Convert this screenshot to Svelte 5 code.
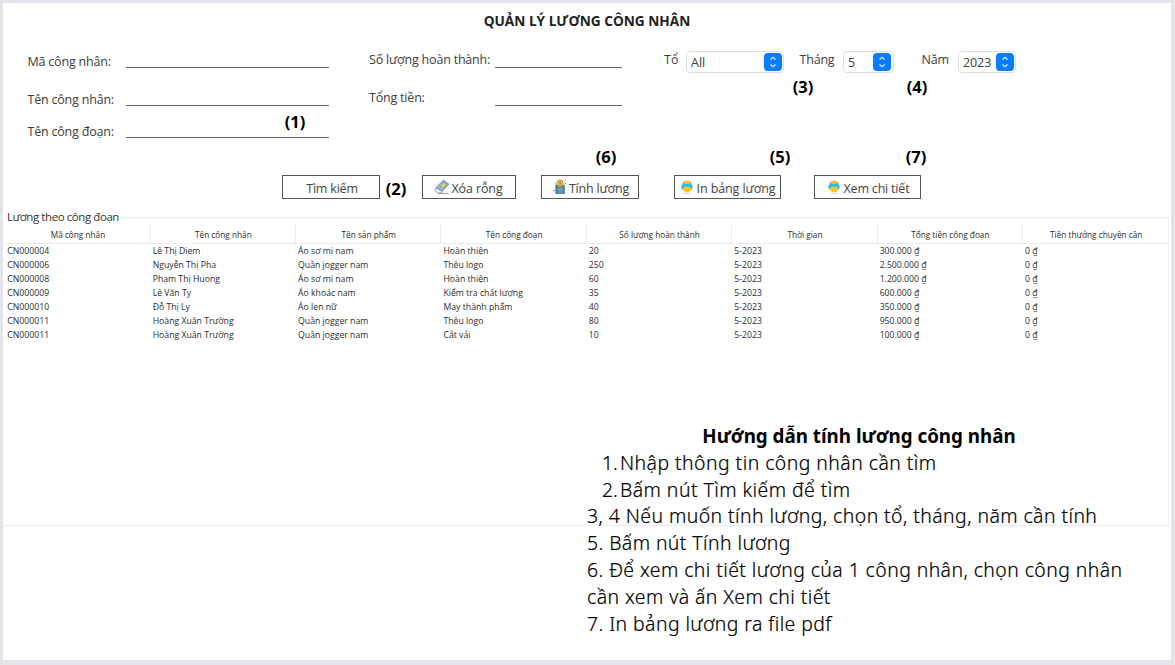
<script>
  const columns = [
    'Mã công nhân', 'Tên công nhân', 'Tên sản phẩm', 'Tên công đoạn',
    'Số lượng hoàn thành', 'Thời gian', 'Tổng tiền công đoạn', 'Tiền thưởng chuyên cần'
  ];
  const rows = [
    ['CN000004', 'Lê Thị Diem', 'Áo sơ mi nam', 'Hoàn thiện', '20', '5-2023', '300.000 ₫', '0 ₫'],
    ['CN000006', 'Nguyễn Thị Pha', 'Quần jogger nam', 'Thêu logo', '250', '5-2023', '2.500.000 ₫', '0 ₫'],
    ['CN000008', 'Phạm Thị Huong', 'Áo sơ mi nam', 'Hoàn thiện', '60', '5-2023', '1.200.000 ₫', '0 ₫'],
    ['CN000009', 'Lê Văn Ty', 'Áo khoác nam', 'Kiểm tra chất lượng', '35', '5-2023', '600.000 ₫', '0 ₫'],
    ['CN000010', 'Đỗ Thị Ly', 'Áo len nữ', 'May thành phẩm', '40', '5-2023', '350.000 ₫', '0 ₫'],
    ['CN000011', 'Hoàng Xuân Trường', 'Quần jogger nam', 'Thêu logo', '80', '5-2023', '950.000 ₫', '0 ₫'],
    ['CN000011', 'Hoàng Xuân Trường', 'Quần jogger nam', 'Cắt vải', '10', '5-2023', '100.000 ₫', '0 ₫']
  ];
</script>

{#snippet stepper()}
  <span class="stepper">
    <svg width="18" height="18" viewBox="0 0 18 18">
      <path d="M6.5 6.5 9 4.3 11.5 6.5M6.5 11.5 9 13.7 11.5 11.5" fill="none" stroke="#d6eaff" stroke-width="1.2" />
    </svg>
  </span>
{/snippet}

{#snippet eraser()}
  <svg width="16" height="16" viewBox="0 0 16 16">
    <path d="M2 8.6 9.4 1.2 14.8 5 8 12.6z" fill="#8db6ea" stroke="#5b82b8" stroke-width=".9" />
    <path d="M2 8.6 8 12.6 6.6 14.2H4.4L1 11.6z" fill="#f6f8fb" stroke="#7b8794" stroke-width=".8" />
    <path d="M6 7.2 9.6 3.4l3 2L9 9.4z" fill="#f4cd5c" stroke="#6482ad" stroke-width=".6" />
    <path d="M4 14.4h10.5" stroke="#7c858d" stroke-width=".9" />
  </svg>
{/snippet}

{#snippet purse()}
  <svg width="14" height="16" viewBox="0 0 14 16">
    <path d="M2.6 5.8h9V15h-9z" fill="#5e93af" />
    <path d="M2.6 5.8h1.6V15H2.6zM10.4 6h1.2v9h-1.2z" fill="#48788f" />
    <path d="M5.4 9.8h3.4v1.5H5.4z" fill="#86b0c5" />
    <circle cx="7.1" cy="4" r="3.3" fill="#e8bf3f" stroke="#a08936" stroke-width=".5" />
    <path d="M7.1 2.4v3.2M6.2 3.1h1.8M6.2 4.8h1.8" stroke="#937222" stroke-width=".6" />
    <path d="M11.3 2.6l1.2-1M12 4.6h1.3M2.6 4.6l-.9-.8M.2 11.6h1.4" stroke="#4a5660" stroke-width=".8" />
  </svg>
{/snippet}

{#snippet printer()}
  <svg width="12" height="14" viewBox="0 0 12 14">
    <ellipse cx="6" cy="13.4" rx="4.5" ry=".6" fill="#dcdce0" />
    <path d="M2.4 4.8V2.5L4.6.5h2.8l2.2 2v2.3z" fill="#f6c42c" />
    <path d="M1.7 4 3.4 1.8M8.6 1.8 10.3 4" stroke="#c06ac6" stroke-width="1.2" />
    <rect x=".4" y="4" width="11.2" height="5.6" rx="2.2" fill="#25bfe9" />
    <path d="M3.2 6.8h5.6l1.6 2.8Q8.8 12.4 6 12.4T1.6 9.6z" fill="#f9c51b" />
  </svg>
{/snippet}

<main class="sheet">
  <h1>QUẢN LÝ LƯƠNG CÔNG NHÂN</h1>

  <section class="form">
    <div class="fields worker">
      <label><span>Mã công nhân:</span><i></i></label>
      <label><span>Tên công nhân:</span><i></i></label>
      <label><span>Tên công đoạn:</span><i></i></label>
    </div>
    <div class="fields totals">
      <label><span>Số lượng hoàn thành:</span><i></i></label>
      <label><span>Tổng tiền:</span><i></i></label>
    </div>
    <div class="filters">
      <span class="caption team">Tổ</span>
      <div class="combo wide"><span>All</span>{@render stepper()}</div>
      <span class="caption month">Tháng</span>
      <div class="combo small"><span>5</span>{@render stepper()}</div>
      <span class="caption year">Năm</span>
      <div class="combo medium"><span>2023</span>{@render stepper()}</div>
    </div>
  </section>

  <section class="actions">
    <button class="search"><span>Tìm kiếm</span></button>
    <button class="clear">{@render eraser()}<span>Xóa rỗng</span></button>
    <button class="calc">{@render purse()}<span>Tính lương</span></button>
    <button class="print">{@render printer()}<span>In bảng lương</span></button>
    <button class="detail">{@render printer()}<span>Xem chi tiết</span></button>
  </section>

  <section class="panel">
    <div class="legend"><span>Lương theo công đoạn</span><i></i></div>
    <div class="table">
      <div class="row head">
        {#each columns as column}<div><span>{column}</span></div>{/each}
      </div>
      {#each rows as row}
        <div class="row">
          {#each row as cell}<div><span>{cell}</span></div>{/each}
        </div>
      {/each}
    </div>
  </section>

  <b class="mark m1">(1)</b>
  <b class="mark m2">(2)</b>
  <b class="mark m3">(3)</b>
  <b class="mark m4">(4)</b>
  <b class="mark m5">(5)</b>
  <b class="mark m6">(6)</b>
  <b class="mark m7">(7)</b>

  <aside class="guide">
    <h2>Hướng dẫn tính lương công nhân</h2>
    <p class="item"><span>1.</span><span>Nhập thông tin công nhân cần tìm</span></p>
    <p class="item"><span>2.</span><span>Bấm nút Tìm kiếm để tìm</span></p>
    <p>3, 4 Nếu muốn tính lương, chọn tổ, tháng, năm cần tính</p>
    <p>5. Bấm nút Tính lương</p>
    <p>6. Để xem chi tiết lương của 1 công nhân, chọn công nhân</p>
    <p>cần xem và ấn Xem chi tiết</p>
    <p>7. In bảng lương ra file pdf</p>
  </aside>
</main>

<style>
  :global(body) { background: #e4e5ea; overflow: hidden; }
  * { box-sizing: border-box; }
  .sheet {
    position: relative;
    width: 1168px;
    height: 657px;
    margin: 3px 4px 5px 3px;
    background: #fff;
    display: flex;
    flex-direction: column;
    font-family: "Open Sans", "Noto Sans", sans-serif;
    font-size: 12.5px;
    color: #3d3d3d;
    white-space: nowrap;
    overflow: hidden;
  }
  h1 {
    margin: 8px 0 0;
    height: 20px;
    line-height: 20px;
    text-align: center;
    font-size: 13.65px;
    font-weight: 700;
    color: #222;
  }
  .form { display: flex; height: 144px; padding: 16px 0 0 24px; align-items: flex-start; }
  .fields { display: flex; flex-direction: column; }
  .fields label { display: flex; line-height: 18px; }
  .fields i { border-bottom: 1.5px solid #666; height: 18px; }
  .fields span { font-size: 12.5px; letter-spacing: -0.2px; }
  .worker { width: 342px; padding-top: 3px; }
  .worker label { height: 38px; }
  .worker label:nth-child(2) { height: 32px; }
  .worker span { width: 99px; padding: 3px 0 0 0.5px; }
  .worker i { width: 203px; }
  .totals { width: 295px; padding-top: 3px; }
  .totals label { height: 38px; }
  .totals span { width: 126.4px; padding-top: 1px; }
  .totals i { width: 127px; }
  .filters { display: flex; align-items: flex-start; }
  .caption { line-height: 18px; padding-top: 4px; }
  .team { width: 22px; }
  .month { width: 44px; margin-left: 15px; letter-spacing: -0.2px; padding-left: 0.5px; }
  .year { width: 37px; margin-left: 27px; letter-spacing: -0.2px; padding-left: 0.5px; }
  .combo {
    height: 22px;
    margin-top: 4px;
    border: 1px solid #dedede;
    border-radius: 4px;
    display: flex;
    align-items: center;
    justify-content: space-between;
    padding: 0 1px 0 4px;
  }
  .wide { width: 98px; }
  .small { width: 51px; padding-right: 2px; }
  .medium { width: 58px; padding-right: 1px; }
  .medium > span:first-child { letter-spacing: -0.1px; }
  .combo > span:first-child { padding-top: 1px; }
  .stepper { flex: none; width: 18px; height: 18px; border-radius: 4px; background: #087dff; }
  .stepper svg { display: block; }

  .actions { display: flex; height: 33px; padding-left: 279px; align-items: flex-start; }
  button {
    height: 24px;
    padding: 1px 0 0;
    border: 1.5px solid #555;
    background: #fff;
    border-radius: 0;
    display: flex;
    align-items: center;
    justify-content: center;
    gap: 1px;
    font: inherit;
    color: #444;
    white-space: nowrap;
  }
  button svg { flex: none; margin-top: -2px; }
  button span { padding-top: 1px; }
  .search { width: 98px; margin-right: 42px; padding-left: 2px; letter-spacing: -0.2px; }
  .clear { width: 94px; margin-right: 25px; padding-right: 1px; letter-spacing: -0.1px; }
  .calc { width: 98px; margin-right: 35px; padding-left: 2px; gap: 2px; letter-spacing: -0.2px; }
  .print { width: 107px; margin-right: 33px; padding-left: 1px; letter-spacing: -0.1px; }
  .detail { width: 107px; padding-left: 2px; letter-spacing: -0.2px; }
  .print, .detail { gap: 4px; }

  .panel { display: flex; flex-direction: column; height: 318px; padding-left: 2px; margin-right: 2px; border-bottom: 1px solid #ececec; }
  .legend { display: flex; align-items: center; height: 18px; padding-left: 2px; font-size: 11.5px; letter-spacing: -0.43px; color: #333; }
  .legend i { flex: 1; height: 1px; background: #ececec; margin-top: 1px; margin-left: 1px; }
  .legend span { line-height: 18px; }
  .table { flex: 1; font-size: 8.7px; border-right: 1px solid #f0f0f0; margin-top: -9px; padding-top: 8px; color: #2c2c2c; }
  .row { display: grid; grid-template-columns: repeat(8, 145.4px); height: 14px; line-height: 14px; padding-left: 0.3px; }
  .row div { padding-left: 2px; }
  .head { height: 19px; line-height: 19px; border-bottom: 1px solid #ebebeb; font-size: 8.25px; }
  .head div { text-align: center; padding: 0 0 0 1px; border-right: 1px solid #ebebeb; }
  .head div:last-child { border: 0; }

  .mark {
    position: absolute;
    width: 30px;
    text-align: center;
    line-height: 20px;
    font-family: "Noto Sans", sans-serif;
    font-size: 16.5px;
    font-weight: 700;
    color: #000;
  }
  .m1 { left: 277px; top: 109px; }
  .m2 { left: 378px; top: 176px; }
  .m3 { left: 785px; top: 74px; }
  .m4 { left: 899px; top: 74px; }
  .m5 { left: 762px; top: 144px; }
  .m6 { left: 588px; top: 144px; }
  .m7 { left: 898px; top: 144px; }

  .guide {
    position: absolute;
    left: 584px;
    top: 420px;
    width: 544px;
    font-family: "Noto Sans", sans-serif;
    font-size: 19.4px;
    font-weight: 300;
    letter-spacing: 0.43px;
    line-height: 26.8px;
    color: #000;
    -webkit-text-stroke: 0.2px #000;
  }
  .guide h2 { margin: 0; font-size: 18.8px; line-height: 26.8px; text-align: center; letter-spacing: 0; font-weight: 700; -webkit-text-stroke: 0; }
  .guide p { margin: 0; }
  .item { display: flex; padding-left: 15px; letter-spacing: 0.46px; }
  .item span:first-child { width: 18px; letter-spacing: 0; }
</style>
